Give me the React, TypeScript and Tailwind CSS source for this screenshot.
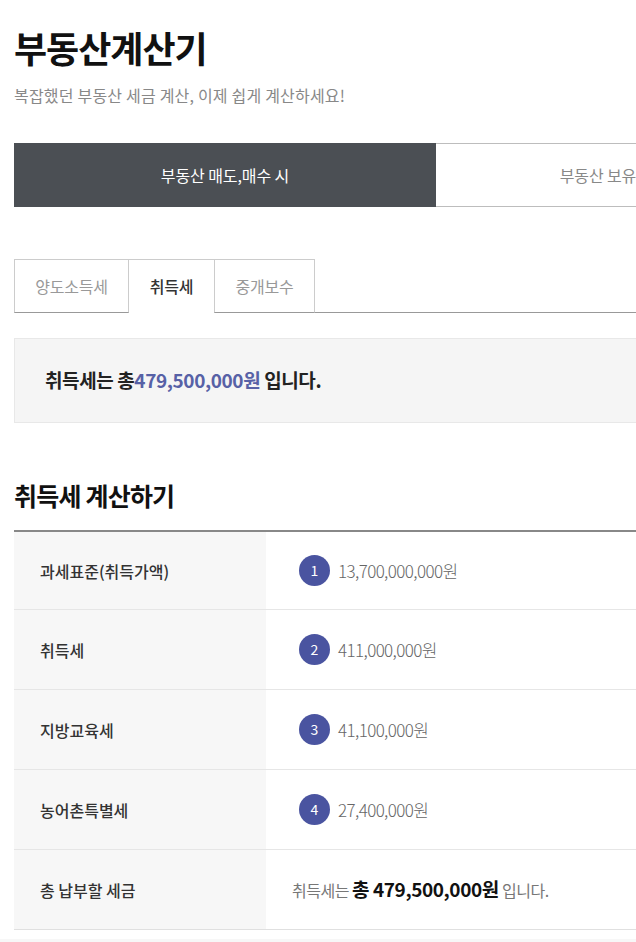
import React, { useState } from 'react';

const rows = [
  { label: '과세표준(취득가액)', no: 1, value: '13,700,000,000원' },
  { label: '취득세', no: 2, value: '411,000,000원' },
  { label: '지방교육세', no: 3, value: '41,100,000원' },
  { label: '농어촌특별세', no: 4, value: '27,400,000원' },
];

const subTabs = ['양도소득세', '취득세', '중개보수'];

const App: React.FC = () => {
  const [mainTab, setMainTab] = useState(0);
  const [subTab, setSubTab] = useState(1);

  return (
    <div
      className="w-[636px] min-h-[942px] overflow-hidden bg-white text-[#222]"
      style={{ fontFamily: '"Noto Sans CJK KR", "Noto Sans", sans-serif' }}
    >
      <div className="w-[858px] pl-[14px]">
        {/* Header */}
        <h1 className="pt-[22px] text-[36px] font-bold leading-[50px] tracking-[-1px] text-[#111]">부동산계산기</h1>
        <p className="mt-[12px] text-[16px] leading-[22px] tracking-[0.2px] text-[#888]">
          복잡했던 부동산 세금 계산, 이제 쉽게 계산하세요!
        </p>

        {/* Main tabs */}
        <div className="mt-[37px] flex h-[64px]">
          <button
            onClick={() => setMainTab(0)}
            className={`flex w-[422px] items-center justify-center text-[16px] tracking-[-0.1px] ${
              mainTab === 0 ? 'bg-[#4b4f54] text-white' : 'border-y border-[#bdbdbd] bg-white text-[#888]'
            }`}
          >
            부동산 매도,매수 시
          </button>
          <button
            onClick={() => setMainTab(1)}
            className={`flex w-[342px] items-center justify-center text-[16px] tracking-[-0.1px] ${
              mainTab === 1 ? 'bg-[#4b4f54] text-white' : 'border-y border-[#bdbdbd] bg-white text-[#888]'
            }`}
          >
            부동산 보유 시
          </button>
        </div>

        {/* Sub tabs */}
        <div className="mt-[52px] flex h-[54px] border-b border-[#999]">
          {subTabs.map((t, i) => (
            <button
              key={t}
              onClick={() => setSubTab(i)}
              className={`-mb-px flex h-[54px] items-center justify-center border border-[#ccc] text-[16px] tracking-[-0.2px] ${
                i === 0 ? 'w-[115px]' : i === 1 ? 'w-[85px] border-x-0' : 'w-[101px]'
              } ${
                subTab === i
                  ? 'border-[#999] border-b-white bg-white font-medium text-[#333]'
                  : 'border-b-[#999] text-[#999]'
              } ${i === 1 ? 'border-x border-x-[#999]' : ''}`}
            >
              {t}
            </button>
          ))}
        </div>

        {/* Summary box */}
        <div className="mt-[25px] flex h-[85px] items-center border border-[#e8e8e8] bg-[#f5f5f5] pl-[30px]">
          <p className="text-[19px] font-bold tracking-[-0.4px] text-[#222]">
            취득세는 총<span className="text-[#5761a6]">479,500,000원</span> 입니다.
          </p>
        </div>

        {/* Section */}
        <h2 className="mt-[56px] text-[25px] font-bold leading-[32px] tracking-[-0.8px] text-[#111]">취득세 계산하기</h2>

        <div className="mt-[19px] border-t-2 border-[#888]">
          {rows.map((r, i) => (
            <div key={r.no} className={`flex border-b border-[#e6e6e6] ${i === 0 ? 'h-[78px]' : 'h-[80px]'}`}>
              <div className="flex w-[252px] items-center bg-[#f7f7f7] pl-[26px] text-[16px] font-medium tracking-[0px] text-[#333]">
                {r.label}
              </div>
              <div className="flex flex-1 items-center pl-[33px]">
                <span className="flex h-[31px] w-[31px] items-center justify-center rounded-full bg-[#4a54a0] text-[14px] text-white">
                  {r.no}
                </span>
                <span className="ml-[8px] text-[17px] font-light tracking-[-0.6px] text-[#666]">{r.value}</span>
              </div>
            </div>
          ))}
          <div className="flex h-[80px] border-b border-[#e0e0e0]">
            <div className="flex w-[252px] items-center bg-[#f7f7f7] pl-[26px] text-[16px] font-medium tracking-[0px] text-[#333]">
              총 납부할 세금
            </div>
            <div className="flex flex-1 items-center pl-[26px] text-[16px] tracking-[-0.5px] text-[#777]">
              취득세는&nbsp;
              <b className="text-[19px] font-bold tracking-[-0.4px] text-[#111]">총 479,500,000원</b>
              &nbsp;입니다.
            </div>
          </div>
        </div>
      </div>
      <div className="mt-[9px] h-[40px] bg-[#f7f7f7]" />
    </div>
  );
};

export default App;
